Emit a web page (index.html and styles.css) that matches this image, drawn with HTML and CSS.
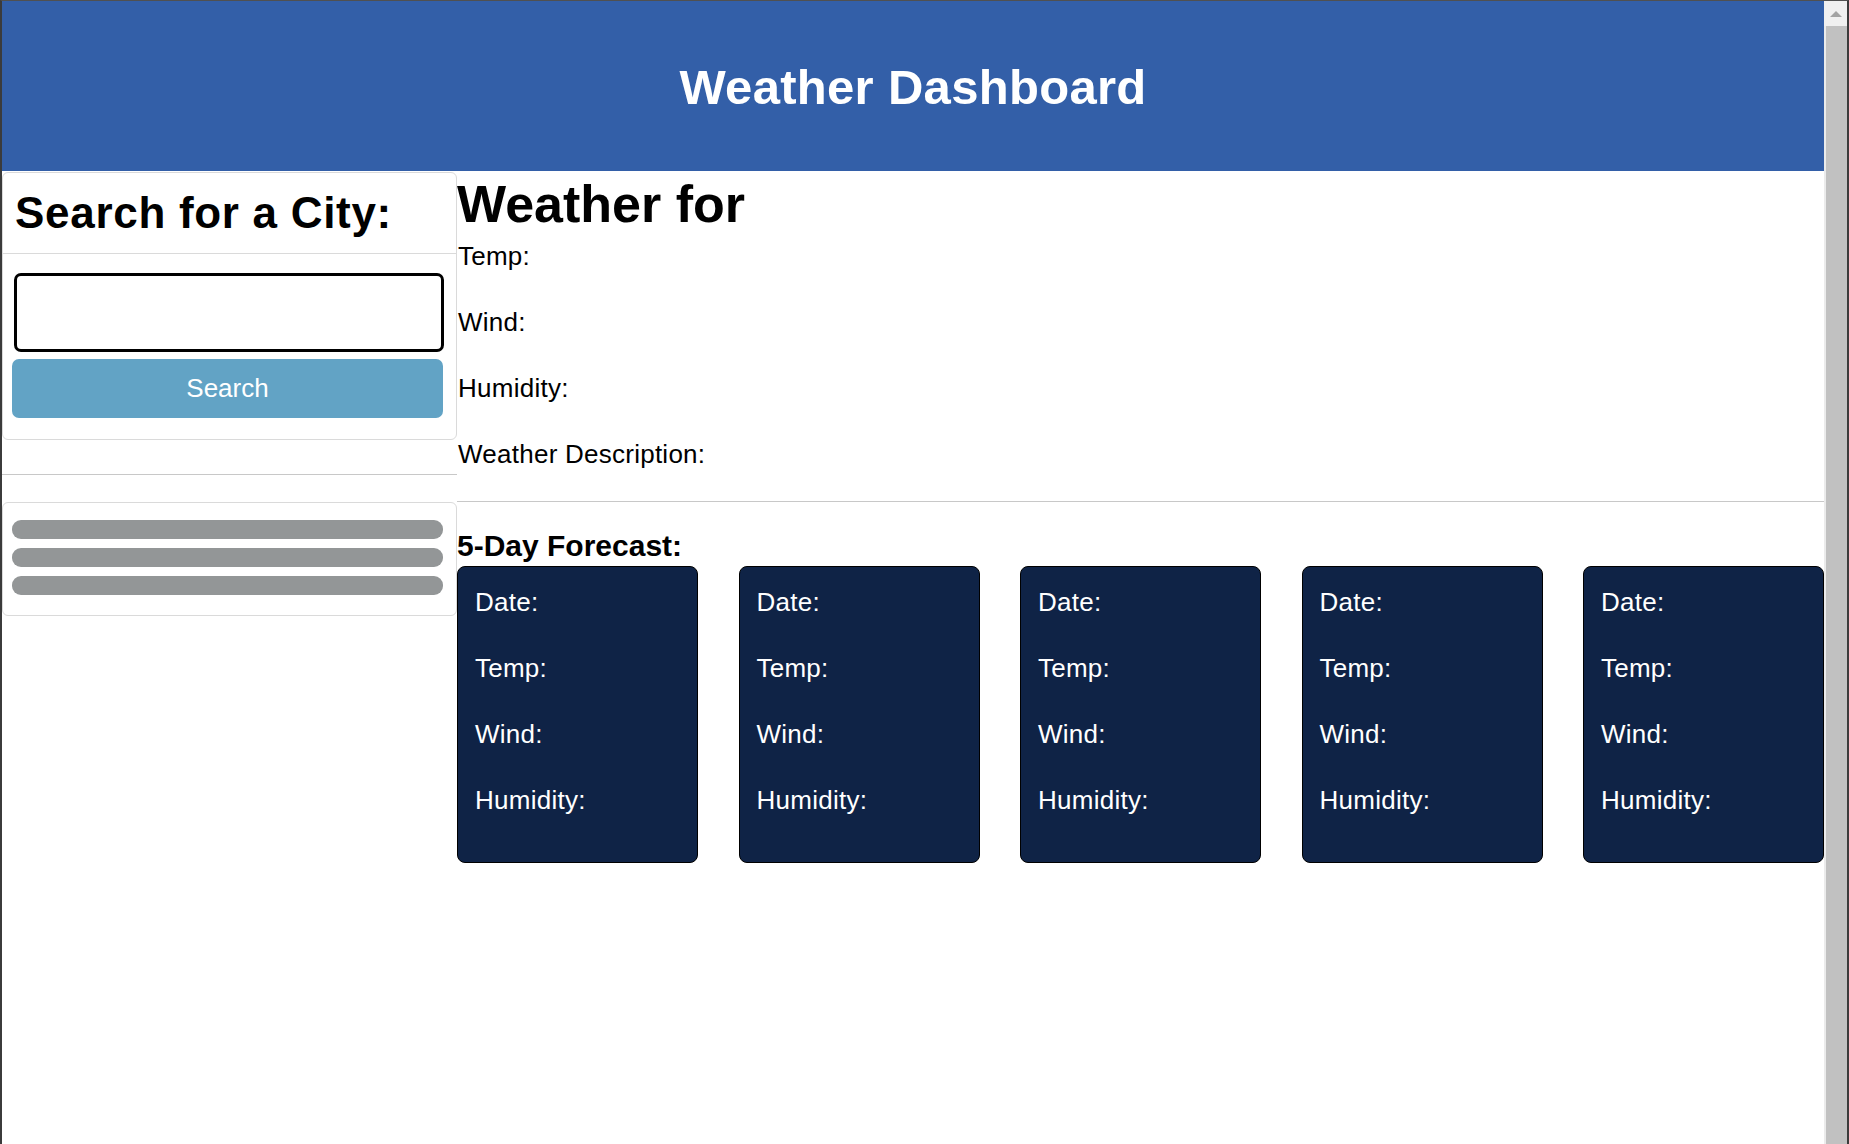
FILE: index.html
```html
<!DOCTYPE html>
<html lang="en">
<head>
<meta charset="utf-8">
<title>Weather Dashboard</title>
<link rel="stylesheet" href="styles.css">
</head>
<body>
  <div class="page">
    <header class="topbar">
      <h1 class="topbar-title">Weather Dashboard</h1>
    </header>
    <div class="content">
      <aside class="sidebar">
        <section class="card search-card">
          <div class="card-header">
            <h2 class="search-title">Search for a City:</h2>
          </div>
          <div class="card-body">
            <input class="city-input" type="text" aria-label="City">
            <button class="search-btn" type="button">Search</button>
          </div>
        </section>
        <hr class="side-rule">
        <section class="card history-card">
          <span class="history-item"></span>
          <span class="history-item"></span>
          <span class="history-item"></span>
        </section>
      </aside>
      <main class="main">
        <h1 class="city-title">Weather for</h1>
        <div class="current">
          <p class="line">Temp:</p>
          <p class="line">Wind:</p>
          <p class="line">Humidity:</p>
          <p class="line">Weather Description:</p>
        </div>
        <hr class="main-rule">
        <h3 class="forecast-title">5-Day Forecast:</h3>
        <div class="forecast">
          <div class="day-card"><p class="line">Date:</p><p class="line">Temp:</p><p class="line">Wind:</p><p class="line">Humidity:</p></div>
          <div class="day-card"><p class="line">Date:</p><p class="line">Temp:</p><p class="line">Wind:</p><p class="line">Humidity:</p></div>
          <div class="day-card"><p class="line">Date:</p><p class="line">Temp:</p><p class="line">Wind:</p><p class="line">Humidity:</p></div>
          <div class="day-card"><p class="line">Date:</p><p class="line">Temp:</p><p class="line">Wind:</p><p class="line">Humidity:</p></div>
          <div class="day-card"><p class="line">Date:</p><p class="line">Temp:</p><p class="line">Wind:</p><p class="line">Humidity:</p></div>
        </div>
      </main>
    </div>
  </div>
  <div class="scrollbar">
    <div class="scroll-arrow"><span class="arrow-up"></span></div>
    <div class="scroll-thumb"></div>
  </div>
</body>
</html>
```
FILE: styles.css
```css
* {
  box-sizing: border-box;
}

html,
body {
  height: 100%;
  margin: 0;
  overflow: hidden;
}

body {
  display: flex;
  font-family: "Liberation Sans", Arial, sans-serif;
  color: #000;
  background: #fff;
  border-top: 1px solid #505050;
  border-left: 2px solid #3b3b3b;
  border-right: 2px solid #3b3b3b;
}

.page {
  flex: 1;
  display: flex;
  flex-direction: column;
  min-width: 0;
}

/* Header */
.topbar {
  background: #335fa8;
  padding: 58px 0 56px;
  text-align: center;
}

.topbar-title {
  margin: 0;
  font-size: 49px;
  line-height: 56px;
  font-weight: bold;
  letter-spacing: 0.3px;
  color: #fff;
}

.content {
  display: flex;
  align-items: flex-start;
}

/* Sidebar */
.sidebar {
  width: 455px;
  flex: 0 0 455px;
  padding-top: 1px;
}

.card {
  border: 1px solid #dadada;
  border-radius: 6px;
  background: #fff;
}

.card-header {
  padding: 14px 12px 14px;
  border-bottom: 1px solid #dadada;
}

.search-title {
  margin: 0;
  font-size: 44px;
  line-height: 52px;
  font-weight: bold;
  letter-spacing: 0.7px;
}

.card-body {
  display: flex;
  flex-direction: column;
  gap: 7px;
  padding: 19px 13px 21px 9px;
}

.city-input {
  height: 79px;
  margin: 0 -1px 0 2px;
  border: 3px solid #000;
  border-radius: 7px;
  background: #fff;
  font: 26px "Liberation Sans", Arial, sans-serif;
}

.search-btn {
  height: 59px;
  border: none;
  border-radius: 7px;
  background: #62a3c5;
  color: #fff;
  font: 26px "Liberation Sans", Arial, sans-serif;
}

.side-rule {
  margin: 34px 0 27px;
  border: 0;
  border-top: 1px solid #c8c8c8;
}

.history-card {
  display: flex;
  flex-direction: column;
  gap: 9px;
  padding: 17px 13px 20px 9px;
}

.history-item {
  display: block;
  height: 19px;
  border-radius: 9px;
  background: #939697;
}

/* Main */
.main {
  flex: 1;
  min-width: 0;
}

.city-title {
  margin: 3px 0 0;
  font-size: 52px;
  line-height: 60px;
  font-weight: bold;
}

.line {
  margin: 0;
  font-size: 26px;
  line-height: 30px;
  letter-spacing: 0.25px;
}

.current {
  display: flex;
  flex-direction: column;
  gap: 36px;
  margin-top: 7px;
  padding-left: 1px;
}

.main-rule {
  margin: 32px 0 0;
  border: 0;
  border-top: 1px solid #c8c8c8;
}

.forecast-title {
  margin: 27px 0 0;
  font-size: 30px;
  line-height: 34px;
  font-weight: bold;
}

.forecast {
  display: flex;
  justify-content: space-between;
  margin-top: 3px;
}

.day-card {
  flex: 0 0 241px;
  height: 297px;
  display: flex;
  flex-direction: column;
  gap: 36px;
  padding: 20px 17px 0;
  background: #0f2346;
  border: 1px solid #000;
  border-radius: 8px;
  color: #fff;
}

/* Fake window scrollbar */
.scrollbar {
  width: 23px;
  flex: 0 0 23px;
  display: flex;
  flex-direction: column;
  background: #ebebeb;
}

.scroll-arrow {
  height: 25px;
  display: flex;
  align-items: center;
  justify-content: center;
  background: #f0f0f0;
}

.arrow-up {
  width: 0;
  height: 0;
  border-left: 6px solid transparent;
  border-right: 6px solid transparent;
  border-bottom: 6px solid #a3a3a3;
}

.scroll-thumb {
  flex: 1;
  margin-left: 2px;
  background: #c1c1c1;
}
```
